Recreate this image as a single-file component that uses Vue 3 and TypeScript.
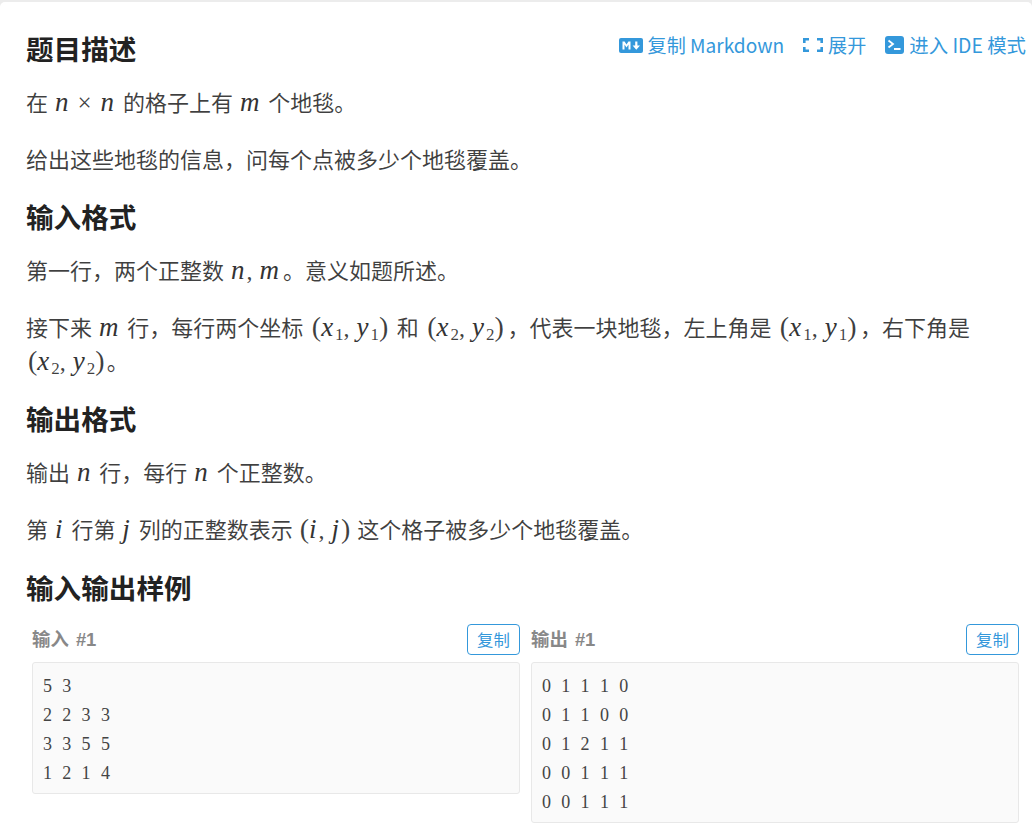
<script setup lang="ts">
interface Sample { title: string; lines: string[] }
const samples: Sample[] = [
  { title: '输入 #1', lines: ['5 3', '2 2 3 3', '3 3 5 5', '1 2 1 4'] },
  { title: '输出 #1', lines: ['0 1 1 1 0', '0 1 1 0 0', '0 1 2 1 1', '0 0 1 1 1', '0 0 1 1 1'] },
]
</script>

<template>
  <main class="card">
    <header class="head">
      <h2>题目描述</h2>
      <nav class="actions">
        <a class="act first">
          <svg class="ic-md" viewBox="0 0 24 15" width="24" height="15">
            <rect width="24" height="15" rx="2" fill="#3498db" />
            <path d="M3.5 11.5V3.5H5.6L7.5 6.4 9.4 3.5H11.5V11.5H9.5V6.6L7.5 9.4 5.5 6.6V11.5Z M16.2 3.5H18.4V7.5H21L17.3 11.8 13.6 7.5H16.2Z" fill="#fff" />
          </svg>
          复制 Markdown
        </a>
        <a class="act second">
          <svg viewBox="0 0 20 14" width="20" height="14" fill="none" stroke="#3498db" stroke-width="2.6">
            <path d="M6 1.3H1.3V5M14 1.3H18.7V5M1.3 9V12.7H6M18.7 9V12.7H14" />
          </svg>
          展开
        </a>
        <a class="act third">
          <svg viewBox="0 0 19 18" width="19" height="18">
            <rect width="19" height="18" rx="3" fill="#3498db" />
            <path d="M3.5 4.5 8 8 3.5 11.5" fill="none" stroke="#fff" stroke-width="1.8" />
            <path d="M9 13H15.5" stroke="#fff" stroke-width="1.8" />
          </svg>
          进入 IDE 模式
        </a>
      </nav>
    </header>

    <p>在 <span class="g"><span class="m">n</span><span class="op">×</span><span class="m">n</span></span> 的格子上有 <span class="g"><span class="m wide">m</span></span> 个地毯。</p>
    <p>给出这些地毯的信息，问每个点被多少个地毯覆盖。</p>

    <h2>输入格式</h2>
    <p>第一行，两个正整数 <span class="g"><span class="m">n</span><span class="c">,</span><span class="m wide">m</span></span>。意义如题所述。</p>
    <p>接下来 <span class="g"><span class="m wide">m</span></span> 行，每行两个坐标 <span class="g pair"><span class="r">(</span><span class="m">x</span><sub>1</sub><span class="c">,</span><span class="m">y</span><sub>1</sub><span class="r">)</span></span> 和 <span class="g pair"><span class="r">(</span><span class="m">x</span><sub>2</sub><span class="c">,</span><span class="m">y</span><sub>2</sub><span class="r">)</span></span>，代表一块地毯，左上角是 <span class="g pair"><span class="r">(</span><span class="m">x</span><sub>1</sub><span class="c">,</span><span class="m">y</span><sub>1</sub><span class="r">)</span></span>，右下角是 <span class="g"><span class="r">(</span><span class="m">x</span><sub>2</sub><span class="c">,</span><span class="m">y</span><sub>2</sub><span class="r">)</span></span>。</p>

    <h2>输出格式</h2>
    <p>输出 <span class="g"><span class="m">n</span></span> 行，每行 <span class="g"><span class="m">n</span></span> 个正整数。</p>
    <p>第 <span class="g"><span class="m">i</span></span> 行第 <span class="g"><span class="m">j</span></span> 列的正整数表示 <span class="g"><span class="r">(</span><span class="m">i</span><span class="c">,</span><span class="m">j</span><span class="r">)</span></span> 这个格子被多少个地毯覆盖。</p>

    <h2 class="last">输入输出样例</h2>
    <section class="samples">
      <div v-for="s in samples" :key="s.title" class="sample">
        <div class="sample-head">
          <span class="label">{{ s.title }}</span>
          <button class="copy" type="button">复制</button>
        </div>
        <pre class="code"><span v-for="(l, i) in s.lines" :key="i" class="line">{{ l }}</span></pre>
      </div>
    </section>
  </main>
</template>

<style>
body { background: #ececec; }
</style>

<style scoped>
.card {
  margin-top: 2px;
  height: 829px;
  box-sizing: border-box;
  background: #fff;
  border-radius: 5px 5px 0 0;
  padding: 26px 6px 0 26px;
  color: rgba(0, 0, 0, 0.75);
  font-family: "Noto Sans CJK SC", "Noto Sans", sans-serif;
  font-size: 22px;
  overflow: hidden;
}
.head {
  display: flex;
  justify-content: space-between;
  align-items: flex-start;
}
h2 {
  margin: 0 0 15.7px;
  font-size: 27.6px;
  line-height: 40px;
  font-weight: 700;
  color: #222;
}
p {
  margin: 0 0 22.4px;
  line-height: 34.56px;
  font-weight: 400;
}
p + h2 { margin-top: -1.7px; }
p + h2.last { margin-top: -0.7px; margin-bottom: 16.7px; }
.actions {
  display: flex;
  font-size: 19.1px;
  line-height: 32px;
  margin-top: 1px;
  color: #3498db;
}
.act {
  display: flex;
  align-items: center;
  gap: 5px;
}
.second, .third { margin-left: 19px; }
.third { font-size: 19.4px; }
.g { margin: 0 2px; white-space: nowrap; }
.g.pair { margin: 0 3.5px; }
.m {
  font-family: "Liberation Serif", serif;
  font-style: italic;
  font-size: 27px;
  line-height: 1;
  letter-spacing: 2px;
  color: #333;
}
.wide { letter-spacing: 2px; }
.op {
  font-family: "Liberation Serif", serif;
  font-size: 25px;
  line-height: 1;
  margin: 0 9px 0 7px;
}
.c {
  font-family: "Liberation Serif", serif;
  font-size: 24px;
  line-height: 1;
  margin-right: 7px;
}
.r {
  font-family: "Liberation Serif", serif;
  font-size: 28px;
  line-height: 1;
}
sub {
  font-family: "Liberation Serif", serif;
  font-size: 17px;
  line-height: 0;
  vertical-align: -4px;
}
.samples {
  display: grid;
  grid-template-columns: 488px 488px;
  column-gap: 11px;
  margin-left: 6px;
  align-items: start;
}
.sample-head {
  display: flex;
  justify-content: space-between;
  align-items: center;
  height: 31px;
  margin-bottom: 7px;
}
.label {
  font-family: "Liberation Sans", "Noto Sans CJK SC", sans-serif;
  font-size: 18.4px;
  font-weight: 700;
  word-spacing: 2px;
  margin-bottom: 2px;
  color: #888;
}
.copy {
  width: 53px;
  height: 31px;
  padding: 0;
  border: 1px solid #3498db;
  border-radius: 4px;
  background: #fff;
  color: #3498db;
  font: 400 16.4px "Noto Sans CJK SC", sans-serif;
}
.code {
  margin: 0;
  padding: 9.5px 10px 5.5px;
  border: 1px solid #e8e8e8;
  border-radius: 3px;
  background: #fafafa;
  font-family: "Liberation Serif", serif;
  font-size: 18px;
  line-height: 28.8px;
  word-spacing: 5.8px;
  color: #444;
}
.line { display: block; }
</style>
